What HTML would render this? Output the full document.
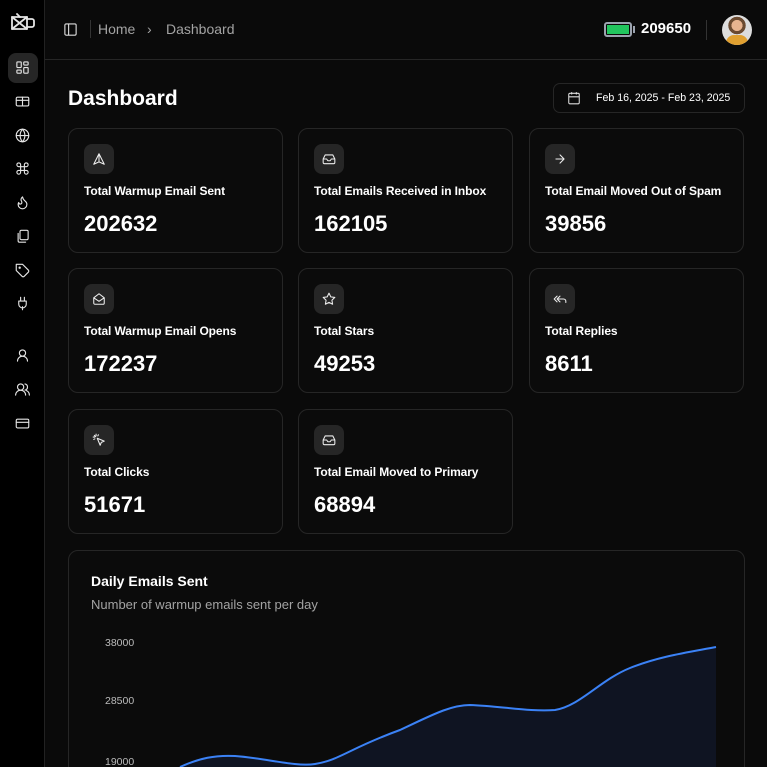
<!DOCTYPE html>
<html style="overflow:hidden;height:767px"><head><style>
*{box-sizing:border-box;margin:0;padding:0}
body{width:767px;height:767px;overflow:hidden;background:#0a0a0a;font-family:"Liberation Sans",sans-serif;color:#fff;position:relative}
.sb{position:absolute;left:0;top:0;width:45px;height:767px;background:#000;border-right:1px solid #222}
.sb svg{position:absolute;left:15px;width:15px;height:15px;fill:none;stroke:#e5e5e5;stroke-width:1.8;stroke-linecap:round;stroke-linejoin:round}
.act{position:absolute;left:8px;top:53px;width:30px;height:30px;border-radius:8px;background:#262626}
.hdr{position:absolute;left:45px;top:0;right:0;height:60px;border-bottom:1px solid #262626}
.crumb{position:absolute;top:21px;font-size:14px;color:#a3a3a3}
.card{position:absolute;width:215px;height:125px;border:1px solid #262626;border-radius:10px;background:#0b0b0b}
.ic{position:absolute;left:15px;top:15px;width:30px;height:30px;border-radius:8px;background:#262626}
.ic svg{position:absolute;left:8px;top:8px;width:14px;height:14px;fill:none;stroke:#eee;stroke-width:1.8;stroke-linecap:round;stroke-linejoin:round}
.t{position:absolute;left:15px;top:55px;font-size:12px;font-weight:bold;letter-spacing:-0.1px}
.n{position:absolute;left:15px;top:82px;font-size:22px;font-weight:bold}
</style></head><body>
<div class="sb">
<svg style="top:13px;left:11px;width:24px;height:18px" viewBox="0 0 24 18"><rect x="1" y="4" width="15" height="12"/><path d="M1 4l15 12M16 4L1 16M16 6h5a2 2 0 0 1 2 2v4a2 2 0 0 1-2 2h-5M6 1l3 3"/></svg>
<div class="act"></div>
<svg style="top:60px" viewBox="0 0 24 24"><rect x="3" y="3" width="7" height="9" rx="1"/><rect x="14" y="3" width="7" height="5" rx="1"/><rect x="14" y="12" width="7" height="9" rx="1"/><rect x="3" y="16" width="7" height="5" rx="1"/></svg>
<svg style="top:94px" viewBox="0 0 24 24"><rect x="2" y="5" width="20" height="14" rx="2"/><path d="M12 5v14M2 10h20"/></svg>
<svg style="top:128px" viewBox="0 0 24 24"><circle cx="12" cy="12" r="10"/><path d="M2 12h20M12 2a15 15 0 0 1 0 20M12 2a15 15 0 0 0 0 20"/></svg>
<svg style="top:161px" viewBox="0 0 24 24"><path d="M15 6v12a3 3 0 1 0 3-3H6a3 3 0 1 0 3 3V6a3 3 0 1 0-3 3h12a3 3 0 1 0-3-3"/></svg>
<svg style="top:195px" viewBox="0 0 24 24"><path d="M8.5 14.5A2.5 2.5 0 0 0 11 12c0-1.4-.5-2-1-3-1-2.1-.2-4 2-6 .5 2.5 2 4.9 4 6.5 2 1.600 3 3.5 3 5.5a7 7 0 1 1-14 0c0-1.2.4-2.3 1-3 0 1.4 1 2.5 2.5 2.5z"/></svg>
<svg style="top:229px" viewBox="0 0 24 24"><rect x="8" y="2" width="13" height="15" rx="2"/><path d="M5 7v12a2 2 0 0 0 2 2h10"/></svg>
<svg style="top:263px" viewBox="0 0 24 24"><path d="M12 2H2v10l9.3 9.3a2.4 2.4 0 0 0 3.4 0l6.6-6.6a2.4 2.4 0 0 0 0-3.4z"/><circle cx="7.5" cy="7.5" r="1"/></svg>
<svg style="top:296px" viewBox="0 0 24 24"><path d="M12 22v-5M9 8V2M15 8V2M18 8v5a6 6 0 0 1-12 0V8z"/></svg>
<svg style="top:348px" viewBox="0 0 24 24"><circle cx="12" cy="8" r="5"/><path d="M20 21a8 8 0 0 0-16 0"/></svg>
<svg style="top:382px" viewBox="0 0 24 24"><circle cx="9" cy="8" r="5"/><path d="M17 21a8 8 0 0 0-16 0M16 3.1a5 5 0 0 1 0 9.8M23 21a8 8 0 0 0-5-7.4"/></svg>
<svg style="top:416px" viewBox="0 0 24 24"><rect x="2" y="5" width="20" height="14" rx="2"/><path d="M2 10h20"/></svg>
</div>
<div class="hdr">
<svg style="position:absolute;left:18px;top:22px;width:15px;height:15px;fill:none;stroke:#ddd;stroke-width:1.8" viewBox="0 0 24 24"><rect x="3" y="3" width="18" height="18" rx="2"/><path d="M9 3v18"/></svg>
<div style="position:absolute;left:45px;top:20px;width:1px;height:18px;background:#333"></div>
<div class="crumb" style="left:53px">Home</div>
<div class="crumb" style="left:102px">›</div>
<div class="crumb" style="left:121px">Dashboard</div>
<div style="position:absolute;left:559px;top:22px;width:28px;height:15px;border:2px solid #9ca3af;border-radius:3px;padding:1px"><div style="width:100%;height:100%;background:#22c55e"></div></div>
<div style="position:absolute;left:588px;top:26px;width:2px;height:7px;background:#9ca3af"></div>
<div style="position:absolute;left:596px;top:20px;font-size:15px;font-weight:bold">209650</div>
<div style="position:absolute;left:661px;top:20px;width:1px;height:20px;background:#333"></div>
<div style="position:absolute;left:677px;top:15px;width:30px;height:30px;border-radius:50%;background:radial-gradient(circle at 50% 35%,#e8b48f 0 22%,#6b4a30 23% 35%,#ddd 36%);overflow:hidden"><div style="position:absolute;bottom:0;left:4px;width:22px;height:10px;background:#e0a030;border-radius:8px 8px 0 0"></div></div>
</div>
<div style="position:absolute;left:68px;top:87px;font-size:21px;font-weight:bold">Dashboard</div>
<div style="position:absolute;left:553px;top:83px;width:192px;height:30px;border:1px solid #262626;border-radius:7px">
<svg style="position:absolute;left:13px;top:7px;width:14px;height:14px;fill:none;stroke:#ddd;stroke-width:1.8" viewBox="0 0 24 24"><rect x="3" y="4" width="18" height="18" rx="2"/><path d="M16 2v4M8 2v4M3 10h18"/></svg>
<div style="position:absolute;left:42px;top:8px;font-size:10.6px">Feb 16, 2025 - Feb 23, 2025</div></div>

<div class="card" style="left:68px;top:128px"><div class="ic"><svg viewBox="0 0 24 24"><path d="M12 3L3 21l9-4 9 4z M12 3v14"/></svg></div><div class="t">Total Warmup Email Sent</div><div class="n">202632</div></div>
<div class="card" style="left:298px;top:128px"><div class="ic"><svg viewBox="0 0 24 24"><path d="M22 12h-6l-2 3h-4l-2-3H2M5.5 5h13L22 12v6a2 2 0 0 1-2 2H4a2 2 0 0 1-2-2v-6z"/></svg></div><div class="t">Total Emails Received in Inbox</div><div class="n">162105</div></div>
<div class="card" style="left:529px;top:128px"><div class="ic"><svg viewBox="0 0 24 24"><path d="M5 12h14M12 5l7 7-7 7"/></svg></div><div class="t">Total Email Moved Out of Spam</div><div class="n">39856</div></div>
<div class="card" style="left:68px;top:268px"><div class="ic"><svg viewBox="0 0 24 24"><path d="M21 10v9a2 2 0 0 1-2 2H5a2 2 0 0 1-2-2v-9l9-7z M3 10l9 6 9-6"/></svg></div><div class="t">Total Warmup Email Opens</div><div class="n">172237</div></div>
<div class="card" style="left:298px;top:268px"><div class="ic"><svg viewBox="0 0 24 24"><path d="M12 2l3.1 6.3 6.9 1-5 4.9 1.2 6.8L12 17.8 5.8 21l1.2-6.8-5-4.9 6.9-1z"/></svg></div><div class="t">Total Stars</div><div class="n">49253</div></div>
<div class="card" style="left:529px;top:268px"><div class="ic"><svg viewBox="0 0 24 24"><path d="M7 17l-5-5 5-5M12 17l-5-5 5-5M22 18v-2a4 4 0 0 0-4-4H7"/></svg></div><div class="t">Total Replies</div><div class="n">8611</div></div>
<div class="card" style="left:68px;top:409px"><div class="ic"><svg viewBox="0 0 24 24"><path d="M9 9l5 12 2-5 5-2zM7 2v3M2 7h3M4 4l2 2M11 3l-1 2M3 11l2-1"/></svg></div><div class="t">Total Clicks</div><div class="n">51671</div></div>
<div class="card" style="left:298px;top:409px"><div class="ic"><svg viewBox="0 0 24 24"><path d="M22 12h-6l-2 3h-4l-2-3H2M5.5 5h13L22 12v6a2 2 0 0 1-2 2H4a2 2 0 0 1-2-2v-6z"/></svg></div><div class="t">Total Email Moved to Primary</div><div class="n">68894</div></div>

<div style="position:absolute;left:68px;top:550px;width:677px;height:230px;border:1px solid #262626;border-radius:10px;background:#0b0b0b">
<div style="position:absolute;left:22px;top:22px;font-size:14px;font-weight:bold">Daily Emails Sent</div>
<div style="position:absolute;left:22px;top:46px;font-size:13px;color:#a3a3a3">Number of warmup emails sent per day</div>
<div style="position:absolute;left:36px;top:86px;font-size:10.5px;color:#bbb">38000</div>
<div style="position:absolute;left:36px;top:144px;font-size:10.5px;color:#bbb">28500</div>
<div style="position:absolute;left:36px;top:205px;font-size:10.5px;color:#bbb">19000</div>
</div>
<svg style="position:absolute;left:0;top:0" width="767" height="767"><path d="M180 767 C200 758 215 755 235 756 C265 758 295 767 315 764 C340 760 350 748 400 730 C430 716 450 705 470 705 C500 706 530 712 555 710 C580 706 600 680 630 668 C660 656 690 652 716 647 L716 767Z" fill="#0f1422"/><path d="M180 767 C200 758 215 755 235 756 C265 758 295 767 315 764 C340 760 350 748 400 730 C430 716 450 705 470 705 C500 706 530 712 555 710 C580 706 600 680 630 668 C660 656 690 652 716 647" fill="none" stroke="#3b82f6" stroke-width="2"/></svg>
</body></html>
